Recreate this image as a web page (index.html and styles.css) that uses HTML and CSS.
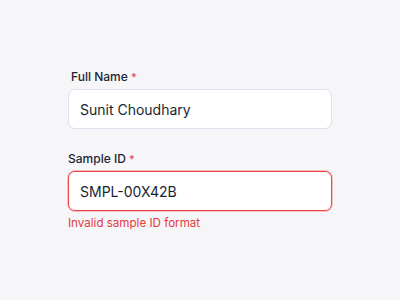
FILE: index.html
```html
<!DOCTYPE html>
<html lang="en">
<head>
<meta charset="utf-8">
<link rel="stylesheet" href="styles.css">
</head>
<body>
<form class="form">
  <div class="field">
    <label class="label label-indent">Full Name <span class="req">*</span></label>
    <input class="input" type="text" value="Sunit Choudhary">
  </div>
  <div class="field">
    <label class="label">Sample ID <span class="req">*</span></label>
    <input class="input input-error" type="text" value="SMPL-00X42B">
    <div class="error">Invalid sample ID format</div>
  </div>
</form>
</body>
</html>
```
FILE: styles.css
```css
html, body {
  margin: 0;
  padding: 0;
  background: #f6f6f9;
  font-family: Inter, "Liberation Sans", sans-serif;
}
.form {
  width: 264px;
  margin: 0 auto;
  padding-top: 69px;
  display: flex;
  flex-direction: column;
  gap: 22px;
}
.field {
  display: flex;
  flex-direction: column;
}
.label {
  font-size: 12px;
  line-height: 16px;
  font-weight: 500;
  color: #1e2535;
  margin-bottom: 4px;
}
.label-indent {
  padding-left: 3px;
}
.req {
  color: #ef4444;
  font-size: 11px;
}
.input {
  box-sizing: border-box;
  height: 40px;
  width: 100%;
  border: 1px solid #dbe1ee;
  border-radius: 7px;
  background: #ffffff;
  padding: 0 11px;
  font-family: inherit;
  font-size: 14px;
  color: #1a1f33;
  outline: none;
  margin: 0;
}
.input-error {
  border-color: #ef4444;
  box-shadow: 0 0 0 1px rgba(239, 68, 68, 0.3);
}
.error {
  margin-top: 4px;
  font-size: 11.6px;
  line-height: 16px;
  color: #e5393a;
}
```
